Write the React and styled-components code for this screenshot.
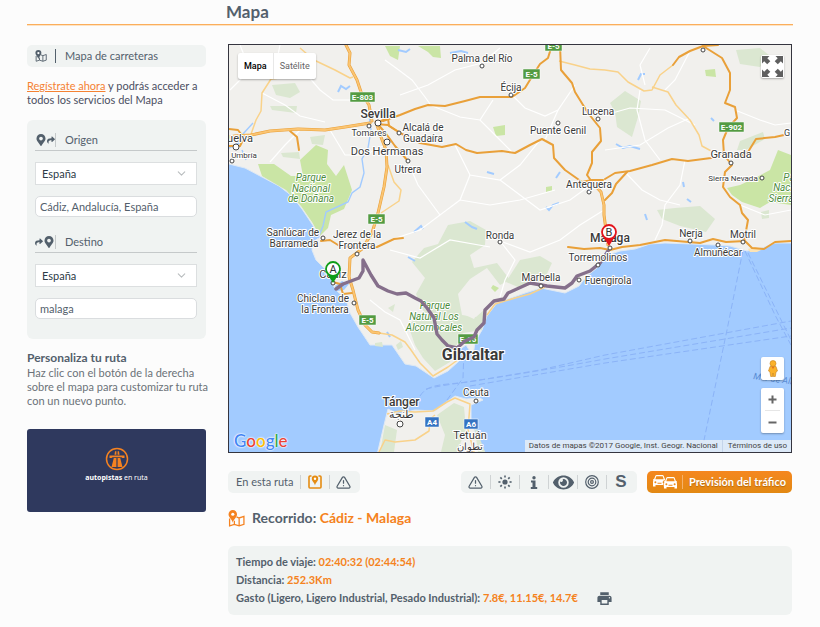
import styled, { createGlobalStyle } from 'styled-components';
import { FaMapMarkerAlt, FaShare, FaEye } from 'react-icons/fa';
import { FiAlertTriangle, FiChevronDown } from 'react-icons/fi';
import { MdPrint } from 'react-icons/md';

const GlobalStyle = createGlobalStyle`
  * {
    box-sizing: border-box;
  }
  body {
    margin: 0;
    background: #fcfcfc;
    color: #53606c;
    font-family: Lato, 'Open Sans', sans-serif;
    font-size: 11px;
    line-height: 14px;
  }
  h1, h2, h3, p {
    margin: 0;
  }
  button, input, select {
    font: inherit;
    color: inherit;
  }
  button {
    border: 0;
    padding: 0;
    background: none;
    cursor: pointer;
  }
`;

const Page = styled.div`
  padding: 0 27px 12px;
`;

const Header = styled.header`
  padding-left: 199px;
  height: 25px;
  border-bottom: 1px solid #fbae5c;
  box-shadow: 0 1px 0 #fde3c4;
  h1 {
    font-size: 17px;
    line-height: 24px;
  }
`;

const Columns = styled.div`
  display: flex;
  gap: 22px;
  padding: 19px 1px 0 0;
`;

const Sidebar = styled.aside`
  flex: 0 0 179px;
  padding-top: 1px;
`;

const Main = styled.main`
  flex: 1;
  min-width: 0;
`;

const SectionTag = styled.div`
  display: flex;
  align-items: center;
  height: 22px;
  padding-left: 8px;
  border-radius: 5px;
  background: #f0f3f2;
  span {
    margin-left: 8px;
    padding-left: 9px;
    border-left: 1px solid #53606c;
  }
`;

const Intro = styled.p`
  margin: 12px 0 13px;
  color: #4b4f62;
  a {
    color: #f58233;
  }
`;

const Panel = styled.form`
  padding: 10px 9px 20px 8px;
  border-radius: 6px;
  background: #f0f3f2;
`;

const FieldTitle = styled.h3`
  display: flex;
  align-items: center;
  height: 21px;
  margin: ${(p) => (p.$spaced ? '15px' : '0')} 0 11px;
  border-bottom: 1px solid #c5c9ca;
  font-size: 11px;
  font-weight: 400;
  span {
    margin-left: auto;
    width: 142px;
    padding-left: 9px;
    border-left: 1px solid #c5c9ca;
  }
`;

const SelectBox = styled.div`
  position: relative;
  margin-bottom: 11px;
  select {
    display: block;
    width: 100%;
    height: 23px;
    padding: 0 6px;
    appearance: none;
    border: 1px solid #dcdfe0;
    border-radius: 0;
    background: #fff;
    color: #2d3a46;
  }
  svg {
    position: absolute;
    right: 9px;
    top: 5px;
    color: #b9bdbf;
    pointer-events: none;
  }
`;

const TextInput = styled.input`
  display: block;
  width: 100%;
  height: 21px;
  padding: 0 4px;
  border: 1px solid #dadddf;
  border-radius: 5px;
  background: #fff;
`;

const Help = styled.section`
  margin: 11px -10px 0 0;
  color: #6b7278;
  h2 {
    color: #53606c;
    font-size: 12px;
    line-height: 16px;
  }
`;

const Banner = styled.a`
  display: flex;
  flex-direction: column;
  align-items: center;
  height: 83px;
  margin-top: 21px;
  padding-top: 18px;
  border-radius: 3px;
  background: #2f395e;
  color: #fff;
  font-family: 'Noto Sans', sans-serif;
  font-size: 7px;
  line-height: 14px;
  text-decoration: none;
`;

const MapFrame = styled.div`
  position: relative;
  aspect-ratio: 564 / 409;
  overflow: hidden;
  border: 1px solid #35353f;
  font-family: Roboto, sans-serif;
  > svg {
    display: block;
    width: 100%;
    height: 100%;
  }
`;

const MapTypes = styled.div`
  position: absolute;
  left: 9px;
  top: 8px;
  display: flex;
  height: 26px;
  border-radius: 2px;
  background: #fff;
  box-shadow: 0 1px 2px rgba(0, 0, 0, 0.3);
  font-size: 9px;
`;

const MapType = styled.button`
  padding: 0 6px;
  color: ${(p) => (p.$active ? '#000' : '#666')};
  font-weight: ${(p) => (p.$active ? 500 : 400)};
  & + & {
    border-left: 1px solid #e8e8e8;
  }
`;

const MapCorner = styled.div`
  position: absolute;
  right: 7px;
  ${(p) => (p.$top ? 'top: 10px;' : 'bottom: 19px;')}
  display: flex;
  flex-direction: column;
  gap: 8px;
`;

const ControlGroup = styled.div`
  width: 23px;
  border-radius: 2px;
  background: #fff;
  box-shadow: 0 1px 2px rgba(0, 0, 0, 0.3);
`;

const MapControl = styled.button`
  display: flex;
  align-items: center;
  justify-content: center;
  width: 23px;
  height: ${(p) => (p.$small ? '22px' : '23px')};
`;

const Divider = styled.div`
  height: 1px;
  margin: 0 4px;
  background: #e6e6e6;
`;

const Attribution = styled.div`
  position: absolute;
  right: 0;
  bottom: 0;
  display: flex;
  background: rgba(245, 245, 245, 0.7);
  color: #444;
  font-size: 8px;
  line-height: 12px;
  span, a {
    padding: 0 4px;
    color: inherit;
    text-decoration: none;
  }
  a {
    border-left: 1px solid #c4d4ea;
    padding-left: 5px;
  }
`;

const GoogleLogo = styled.div`
  position: absolute;
  left: 5px;
  bottom: 0;
  font: 500 17px/22px Lato, sans-serif;
  text-shadow: 0 0 1px #fff, 0 0 2px #fff, 0 0 2px #fff;
`;

const Letter = styled.span`
  color: ${(p) => p.$color};
`;

const Toolbar = styled.div`
  display: flex;
  gap: 10px;
  margin-top: 18px;
`;

const ToolGroup = styled.div`
  display: flex;
  align-items: center;
  height: 22px;
  padding: 0 2px 0 ${(p) => (p.$labelled ? '8px' : '0')};
  margin-right: ${(p) => (p.$labelled ? 'auto' : '0')};
  border-radius: 5px;
  background: #f0f3f2;
`;

const Tool = styled.button`
  display: flex;
  align-items: center;
  justify-content: center;
  width: 29px;
  height: 14px;
  color: #53606c;
  & + &, span + & {
    border-left: 1px solid #cfd3d4;
  }
  span + & {
    margin-left: 6px;
  }
`;

const TrafficButton = styled.button`
  display: flex;
  align-items: center;
  justify-content: space-between;
  flex: 0 0 auto;
  min-width: 145px;
  height: 22px;
  padding: 0 6px;
  border-radius: 5px;
  background: linear-gradient(#f5871f, #e28913);
  color: #fff;
  font-weight: 700;
  white-space: nowrap;
  svg {
    flex: none;
  }
  span {
    padding-left: 6px;
    border-left: 1px solid #f5b26b;
    text-shadow: 0 1px 1px #b5690c;
  }
`;

const RouteTitle = styled.h2`
  display: flex;
  align-items: center;
  gap: 7px;
  margin: 15px 0 18px;
  font-size: 14px;
  line-height: 20px;
  svg {
    display: block;
  }
`;

const Accent = styled.span`
  color: #f58220;
  font-weight: 700;
`;

const Summary = styled.div`
  padding: 7px 8px 8px;
  border-radius: 6px;
  background: #f0f3f2;
  font-weight: 700;
  line-height: 18px;
`;

const CostLine = styled.div`
  display: flex;
  align-items: center;
  gap: 18px;
  height: 18px;
  svg {
    display: block;
  }
`;

// [points, width]
const motorways = [
  ['346,45 350,53 349,65 357,80 361,92 369,105 372,121', 3],
  ['229,137 235,136 251,135 270,131 298,129 325,130 345,127 370,123', 3],
  ['383,121 400,115 415,109 428,105 445,106 465,101 480,97 512,97 525,88 533,75 540,64 548,58 552,45', 2],
  ['376,124 388,125 402,134 420,143 442,147 456,144 466,150 477,153 502,151 515,153 530,145 542,139 553,145 554,158 565,170 582,182 592,180 603,180', 2],
  ['560,45 561,70 572,83 575,92 588,113 600,128 601,141 592,152 592,163 587,175 592,182', 2],
  ['376,122 381,137 386,150 387,167 384,187 378,213 372,233 362,249 350,258 349,277 353,290 358,310 365,325 372,332 379,333', 3],
  ['229,129 238,130 244,138 240,146 229,146', 2],
  ['290,131 297,137 299,150', 2],
  ['605,179 615,173 630,171 652,165 672,159 688,161 711,158 723,152', 2],
  ['605,200 612,193 616,184 627,172', 2],
  ['703,46 722,58 730,73 730,90 725,103 735,107 737,118 728,128 723,140 724,155 732,165 725,172 723,187 730,197 740,205 742,213 748,220 744,242', 2],
  ['718,45 703,46 690,51 679,57 673,65', 2],
  ['726,155 737,157 748,152 756,139 775,137 784,135', 2],
  ['610,250 622,247 640,245 665,240 700,243 713,239 726,242 745,241 752,248 764,249 775,242 791,241', 2],
  ['592,182 601,192 604,205 604,215 608,245', 3],
  ['376,122 387,135 395,146 408,161', 2],
  ['381,121 388,118 389,126 400,133', 2],
  ['321,241 330,240 338,245 355,248 377,247 394,239 403,238', 2],
  ['333,282 340,284 343,294 352,293', 2],
  ['568,247 584,249 600,248 610,250', 2],
];

const minorRoads = [
  '605,70 618,72 628,82 644,91 652,90 660,75 673,65',
  '652,87 668,92 676,105 690,120 699,135 702,146 713,152',
  '250,137 256,120 261,111 262,93 271,79 280,78',
  '300,48 314,60 335,70 350,78 353,77',
  '559,61 575,65 590,69 605,70',
  '388,165 394,182 401,190 399,201 381,213',
  '379,333 392,335 405,342 411,350 420,363 433,376 448,367 459,359',
  '379,452 385,440 395,442 415,440 429,431 430,419 435,415',
  '387,414 400,411 415,412 433,411 447,402 455,398 470,404 468,430 474,452',
  '487,315 495,304 515,298 530,294 545,287',
];

const localRoads = [
  '280,45 277,60 288,70 308,76 320,90 333,100 352,100',
  '262,93 285,105 300,116 325,122',
  '385,60 396,68 412,80 425,97 430,104',
  '400,95 428,85 455,70 482,63 500,48',
  '430,105 460,117 480,120 500,140 512,152',
  '512,95 525,108 545,116 558,110 575,85',
  '480,120 493,100', '455,145 470,175 500,180 520,165 540,140',
  '470,175 460,200 440,215 418,185 408,162',
  '500,180 520,195 540,210 570,200 592,184',
  '440,215 420,230 390,240', '460,200 490,205 520,200 555,190',
  '558,110 545,140', '605,115 630,108 665,110 695,125',
  '605,150 640,145 668,128 690,118', '640,90 637,110 645,140 660,160',
  '735,110 760,120 775,125 791,123', '685,160 680,185 665,205 662,225 655,240',
  '625,172 642,190 660,200 680,205', '740,205 765,215 791,210',
  '300,130 285,145 270,162', '330,130 345,155 365,155 385,145',
  '390,250 420,258 450,240 490,247', '500,241 515,260 505,280 500,297',
  '500,241 530,252 560,240 580,225 604,210', '370,300 385,312 400,320 415,350',
  '240,45 250,70 230,90', '650,48 640,65 645,85', '690,51 675,80 665,90',
];

const greens = [
  'M258,164L274,164L291,176L303,176L300,160L316,145L328,150L327,164L336,176L344,165L352,190L344,209L331,215L328,228L320,236L312,222L301,206L286,190L262,176Z',
  'M493,127L505,125L505,135L496,136Z', 'M546,187l6,-1v5l-6,1Z',
  'M385,46L400,46L398,60L390,56Z', 'M418,46L440,46L441,58L433,57L428,52Z',
  'M727,188L740,185L755,178L770,170L778,150L791,155L791,205L770,202L760,208L742,202L732,195Z',
  'M705,70L715,69L716,77L706,76Z', 'M493,285l6,3l-4,4l-4,-4Z',
];

const paleGreens = [
  'M272,85L295,83L300,92L290,98L276,95Z', 'M270,106L297,106L296,113L272,110Z',
  'M310,137L325,135L323,145L312,144Z', 'M281,153L299,152L300,159L283,157Z',
  'M448,225L470,221L486,230L485,245L470,255L474,268L497,263L510,280L500,285L487,268L470,279L458,294L462,315L476,317L484,310L482,330L463,333L455,348L450,362L435,371L423,358L415,345L408,325L424,312L416,294L425,278L412,262L424,248L438,244Z',
  'M520,260L540,256L552,263L544,280L520,288L506,282Z',
  'M610,103L625,91L641,101L638,117L632,137L617,127L615,112Z',
  'M736,50L760,48L770,56L760,67L740,64Z',
  'M657,210L675,208L700,206L715,219L706,232L680,226L662,219Z',
  'M740,141L763,132L765,139L746,150L737,150Z', 'M761,212l8,-2v8l-7,1Z',
  'M375,343l7,-1l1,5l-8,-1Z', 'M396,345l5,-4l2,6l-5,3Z',
  'M388,308l7,-4l-2,8Z', 'M380,452L385,425L397,430L394,452Z',
  'M437,415L454,403L464,407L466,429L457,452L441,452L445,435Z', 'M474,423L485,452L478,452Z',
];

const waters = [
  '338,92 341,86 346,89 350,86', '398,50 406,52 410,49', '450,53 461,51 468,53', '414,232 421,226 423,229',
  '465,222 472,227 477,229', '546,207 549,210 553,205 559,203', '556,178 560,172', '616,144 623,148 630,146 640,149',
  '638,80 641,74 645,74', '711,118 714,121', '683,182 684,187', '687,199 691,202', '645,214 647,220', '487,172 494,174',
  '408,257 415,261', '387,332 390,337',
];

const dots = [
  ['378', '123', 3], ['369', '126', 2], ['399', '133', 2], ['387', '142', 3], ['408', '161', 2],
  ['482', '66', 2], ['511', '95', 2], ['598', '119', 2], ['558', '123', 2], ['589', '192', 2],
  ['703', '50', 2], ['731', '163', 2], ['762', '178', 2], ['500', '242', 2], ['690', '241', 2],
  ['718', '245', 2], ['743', '242', 2], ['323', '238', 2], ['357', '254', 2], ['333', '283', 2],
  ['354', '303', 2], ['541', '286', 2], ['598', '265', 2], ['579', '280', 2], ['400', '424', 3],
  ['476', '401', 2], ['236', '147', 3], ['232', '161', 2], ['610', '248', 2], ['470', '451', 2],
];

const labels = [
  ['Palma del Río', 482, 62, 10], ['Écija', 511, 91, 10], ['Lucena', 598, 115, 10],
  ['Puente Genil', 558, 134, 10], ['Antequera', 589, 188, 10], ['Ronda', 500, 239, 10],
  ['Sevilla', 378, 118, 12, 500], ['Tomares', 369, 136, 9], ['Alcalá de', 423, 131, 10],
  ['Guadaíra', 423, 142, 10], ['Dos Hermanas', 387, 155, 11], ['Utrera', 408, 173, 10],
  ['uelva', 240, 142, 11], ['Umbría', 244, 158, 8], ['Sanlúcar de', 293, 236, 10],
  ['Barrameda', 294, 247, 10], ['Jerez de la', 357, 238, 10], ['Frontera', 357, 249, 10],
  ['Cádiz', 333, 278, 11], ['Chiclana de', 323, 302, 10], ['la Frontera', 325, 313, 10],
  ['Granada', 731, 158, 11], ['Sierra Nevada', 733, 181, 8], ['Málaga', 610, 242, 12, 500],
  ['Nerja', 691, 237, 10], ['Motril', 743, 238, 10], ['Almuñécar', 718, 256, 10],
  ['Torremolinos', 598, 261, 10], ['Marbella', 541, 281, 10], ['Fuengirola', 608, 284, 10],
  ['Gibraltar', 473, 360, 16, 700], ['Tánger', 401, 406, 12, 500], ['طنجة', 401, 418, 11],
  ['Ceuta', 476, 396, 10], ['Tetuán', 470, 439, 11], ['تطوان', 470, 450, 10], ['G', 787, 136, 9],
];

const parkLabels = [
  ['Parque', 311, 181], ['Nacional', 311, 192], ['de Doñana', 311, 202],
  ['Parque', 435, 309], ['Natural Los', 434, 320], ['Alcornocales', 434, 331],
  ['Pa', 789, 181], ['Naci', 783, 191], ['Sierra', 781, 202],
];

// [text, x, y, width, blue]
const shields = [
  ['E-803', 350, 92, 25], ['E-5', 368, 214, 17], ['E-5', 523, 69, 17], ['E-5', 545, 41, 17],
  ['E-902', 719, 122, 25], ['E-5', 359, 315, 17], ['E-15', 458, 334, 20],
  ['A4', 425, 417, 14, true], ['A6', 464, 419, 14, true],
];

const RouteMap = () => (
  <svg viewBox="229 45 562 407" preserveAspectRatio="xMidYMid slice" role="img" aria-label="Mapa de Andalucía">
    <rect x="229" y="45" width="563" height="407" fill="#a2cbff" />
    <g fill="#f1f0ed" stroke="#dfe9f4">
      <path d="M225,163L245,168L262,177L279,186L292,196L302,209L312,224L320,237L313,242L312,250L316,260L323,267L330,273L332,284L337,291L346,299L350,313L358,327L370,345L392,345L405,364L416,366L434,378L448,371L459,361L459,350L466,345L473,356L475,342L482,330L487,316L496,304L508,299L525,293L541,288L565,293L579,286L586,277L598,267L605,256L620,251L635,249L650,244L665,243L692,244L715,245L730,246L747,251L762,248L775,243L795,243L795,40L225,40Z" />
      <path d="M377,455L384,425L388,409L398,414L415,410L435,411L445,403L455,396L466,399L480,398L483,400L471,405L471,422L477,437L486,455Z" />
    </g>
    <path d="M748,249l6,-2l9,2l-6,3l-7,0Z" fill="#fbe3b5" />
    <g fill="#dbe7d1">{paleGreens.map((d) => <path key={d} d={d} />)}</g>
    <g fill="#cae5a5">{greens.map((d) => <path key={d} d={d} />)}</g>
    <path d="M462,291l12,-6l9,8l-1,12l-8,14l-11,-5l-3,-12Z" fill="#f1f0ed" />
    <g fill="none" stroke="#a2cbff" strokeWidth="1.4">
      <path d="M318,238l5,-12l3,-14l22,-10l4,-9l8,-6l4,-14l-2,-14l6,-11l3,-18l-2,-15" />
      <path d="M229,148l10,-5l4,-9l10,-11M242,150l4,10" />
      {waters.map((w) => <polyline key={w} points={w} strokeWidth="2" />)}
    </g>
    <path d="M335,286l7,-5l7,3l-5,6l-7,1Z" fill="#a2cbff" />
    <g fill="none" stroke="#fff" strokeWidth="1.2">
      {localRoads.map((r) => <polyline key={r} points={r} />)}
    </g>
    <g fill="none" stroke="#f9d28a" strokeWidth="1.5" strokeLinejoin="round">
      {minorRoads.map((r) => <polyline key={r} points={r} />)}
    </g>
    <g fill="none" strokeLinejoin="round" strokeLinecap="round">
      {motorways.map(([pts, w]) => <polyline key={pts} points={pts} stroke="#e9a039" strokeWidth={w} />)}
      {motorways.filter((m) => m[1] === 3).map(([pts]) => (
        <polyline key={pts} points={pts} stroke="#fbc573" strokeWidth="1.8" />
      ))}
    </g>
    <g fill="none" stroke="#8bb3f7" strokeDasharray="6 3">
      <path d="M420,396C428,383 445,385 468,382L540,370L605,355L791,321" />
      <path d="M426,389C450,383 480,382 605,359L791,328" />
      <path d="M447,400L463,378L464,350M470,386L605,363L791,336" />
      <path d="M743,250L727,330L703,445M745,251L775,315L791,345M748,253L791,340" />
    </g>
    <g textAnchor="middle" stroke="#fff" strokeWidth="2" strokeLinejoin="round" paintOrder="stroke" fill="#4c8c3a" fontSize="10" fontStyle="italic">
      {parkLabels.map(([text, x, y]) => <text key={text + x} x={x} y={y}>{text}</text>)}
    </g>
    {shields.map(([text, x, y, w, blue]) => (
      <g key={text + x}>
        <rect x={x} y={y} width={w} height="10" fill={blue ? '#3473c2' : '#539b42'} stroke="#fff" strokeWidth="0.5" />
        <text x={x + w / 2} y={y + 8} textAnchor="middle" fill="#fff" fontSize="8" fontWeight="700">{text}</text>
      </g>
    ))}
    <polyline
      points="336,289 343,284 351,281 359,278 363,271 363,260 371,275 378,286 388,291 397,294 406,293 415,298 421,301 427,308 434,318 437,334 442,340 448,346 457,348 465,341 474,337 477,330 484,323 485,310 494,301 504,299 508,293 530,283 547,286 565,288 572,283 577,276 590,271 600,263 608,251"
      fill="none" stroke="#856f8b" strokeWidth="3.4" strokeLinejoin="round" strokeLinecap="round"
    />
    <g fill="#fff" stroke="#444">
      {dots.map(([cx, cy, r]) => <circle key={cx + cy} cx={cx} cy={cy} r={r} />)}
    </g>
    <g textAnchor="middle" stroke="#fff" strokeWidth="2" strokeLinejoin="round" paintOrder="stroke" fill="#3a3a3a">
      {labels.map(([text, x, y, size, weight]) => (
        <text key={text} x={x} y={y} fontSize={size} fontWeight={weight || 400}>{text}</text>
      ))}
    </g>
    <text x="753" y="379" fill="#5b8ed6" fontSize="9" fontStyle="italic" transform="rotate(8 753 379)">Mar de Alborán</text>
    <Pin x={333} y={269} tip={14} color="#0f9d18" letter="A" />
    <Pin x={609} y={232} tip={14} color="#e3131b" letter="B" />
  </svg>
);

const Pin = ({ x, y, tip, color, letter }) => (
  <g transform={`translate(${x} ${y})`}>
    <path d={`M-7,3L0,${tip}L7,3Z`} fill={color} />
    <circle r="7" fill="#fff" stroke={color} strokeWidth="1.8" />
    <text y="4" textAnchor="middle" fontSize="11" fill="#333">{letter}</text>
  </g>
);

const RoadMapIcon = ({ size = 12, pin = 'currentColor' }) => (
  <svg width={size} height={size} viewBox="0 0 16 16" fill="none" stroke="currentColor">
    <path d="M1.500,8V15L6,13.500L10.500,15L15,13.500V6L10.500,7.500L8,6.500M6,10V13.500M10.500,7.500V15" strokeWidth="1.200" />
    <path d="M4.500,0A4,4 0 0 1 8.500,4C8.500,7 5,9 4.500,12C4,9 0.500,7 0.500,4A4,4 0 0 1 4.500,0Z" fill={pin} stroke="none" />
    <circle cx="4.500" cy="4" r="1.500" fill="#fff" stroke="none" />
  </svg>
);

const MotorwayLogo = () => (
  <svg width="24" height="24" viewBox="0 0 24 24">
    <circle cx="12" cy="12" r="10.500" fill="none" stroke="#f58220" strokeWidth="1.500" />
    <g fill="#f58220">
      <path d="M4.500,8.500H19.500V11H17.500L16.500,10.300H7.500L6.500,11H4.500Z" />
      <path d="M10,4.300H11.400V7.700H9.500ZM12.600,4.300H14L14.500,7.700H12.600Z" />
      <path d="M8.800,11H11.400V20H6.500ZM12.600,11H15.200L17.500,20H12.600Z" />
    </g>
  </svg>
);

const ExpandIcon = () => (
  <svg width="23" height="23" viewBox="0 0 23 23" fill="#5f5f5f">
    {[0, 90, 180, 270].map((deg) => (
      <path key={deg} d="M1,1H8.500L6.300,3.200L9.300,6.200L6.200,9.300L3.200,6.300L1,8.500Z" transform={`rotate(${deg} 11.5 11.5)`} />
    ))}
  </svg>
);

const Pegman = () => (
  <svg width="10" height="17" viewBox="0 0 10 17" fill="#fbb22b" stroke="#c8821b" strokeWidth="0.600">
    <path d="M2,6.500H8L9.500,11L8,12L7.300,16.500H5.300L5,13L4.700,16.500H2.700L2,12L0.500,11Z" />
    <circle cx="5" cy="3.500" r="3" />
    <path d="M3.500,6.800L5,9L6.500,6.800Z" fill="#e8711c" stroke="none" />
  </svg>
);

const ZoomIcon = ({ plus }) => (
  <svg width="9" height="9" viewBox="0 0 9 9" fill="none" stroke="#666" strokeWidth="2">
    <path d={plus ? 'M0.500,4.500H8.500M4.500,0.500V8.500' : 'M0.500,4.500H8.500'} />
  </svg>
);

const PoiIcon = () => (
  <svg width="14" height="14" viewBox="0 0 14 14" fill="none" stroke="#e58c12" strokeWidth="1.600">
    <path d="M3.500,1H2Q1,1 1,2V12Q1,13 2,13H12Q13,13 13,12V2Q13,1 12,1H10.500" />
    <path d="M7,0.500A3.200,3.200 0 0 1 10.200,3.700C10.200,6.500 7.500,7.500 7,10.500C6.500,7.500 3.800,6.500 3.800,3.700A3.200,3.200 0 0 1 7,0.500Z" fill="#e58c12" stroke="none" />
    <circle cx="7" cy="3.800" r="1.200" fill="#fff" stroke="none" />
  </svg>
);

const SunIcon = () => (
  <svg width="14" height="14" viewBox="0 0 14 14" stroke="currentColor" strokeWidth="1.600">
    <circle cx="7" cy="7" r="2.600" fill="currentColor" stroke="none" />
    {[0, 45, 90, 135, 180, 225, 270, 315].map((deg) => (
      <path key={deg} d="M7,0.400V2.500" transform={`rotate(${deg} 7 7)`} />
    ))}
  </svg>
);

const InfoIcon = () => (
  <svg width="8" height="13" viewBox="0 0 8 13" fill="currentColor">
    <circle cx="4" cy="1.800" r="1.700" />
    <path d="M1,4.500H5.500V11H7.200V13H0.800V11H2.500V6.500H1Z" />
  </svg>
);

const TargetIcon = () => (
  <svg width="14" height="14" viewBox="0 0 14 14" fill="none" stroke="currentColor" strokeWidth="1.200">
    <circle cx="7" cy="7" r="6.300" />
    <circle cx="7" cy="7" r="3.800" />
    <circle cx="7" cy="7" r="1.400" />
  </svg>
);

const ServiceLetter = styled.b`
  font: 700 17px/14px 'Liberation Sans', sans-serif;
`;

const FrontCar = ({ x, y }) => (
  <g transform={`translate(${x} ${y})`}>
    <path
      d="M2.5,0.500Q2.800,0 3.500,0H9.500Q10.200,0 10.500,0.500L12,4.200H13V5.200L12.600,5.500Q13,6 13,7V11.500H10.500V10H2.500V11.500H0V7Q0,6 0.400,5.500L0,5.200V4.200H1Z"
      fill="#fff" stroke="#ee8a1b" strokeWidth="1.2" paintOrder="stroke"
    />
    <path d="M3.300,1.300H9.700L10.700,4.300H2.300ZM4.500,7.800H8.500V8.800H4.500Z" fill="#ee8a1b" />
    <circle cx="2.400" cy="7.200" r="1" fill="#ee8a1b" />
    <circle cx="10.600" cy="7.200" r="1" fill="#ee8a1b" />
  </g>
);

const CarsIcon = () => (
  <svg width="24" height="14" viewBox="0 0 24 14">
    <FrontCar x={0} y={0} />
    <FrontCar x={11} y={2} />
  </svg>
);

const logoLetters = [
  ['G', '#4285f4'], ['o', '#ea4335'], ['o', '#fbbc05'], ['g', '#4285f4'], ['l', '#34a853'], ['e', '#ea4335'],
];

const CountrySelect = ({ label }) => (
  <SelectBox>
    <select aria-label={label} defaultValue="es">
      <option value="es">España</option>
    </select>
    <FiChevronDown size={13} />
  </SelectBox>
);

const App = () => (
  <>
    <GlobalStyle />
    <Page>
      <Header>
        <h1>Mapa</h1>
      </Header>
      <Columns>
        <Sidebar>
          <SectionTag>
            <RoadMapIcon />
            <span>Mapa de carreteras</span>
          </SectionTag>
          <Intro>
            <a href="#registro">Regístrate ahora</a> y podrás acceder a todos los servicios del Mapa
          </Intro>
          <Panel>
            <FieldTitle>
              <FaMapMarkerAlt size={12} />
              <FaShare size={8} />
              <span>Origen</span>
            </FieldTitle>
            <CountrySelect label="País de origen" />
            <TextInput aria-label="Origen" defaultValue="Cádiz, Andalucía, España" />
            <FieldTitle $spaced>
              <FaShare size={8} />
              <FaMapMarkerAlt size={12} />
              <span>Destino</span>
            </FieldTitle>
            <CountrySelect label="País de destino" />
            <TextInput aria-label="Destino" defaultValue="malaga" />
          </Panel>
          <Help>
            <h2>Personaliza tu ruta</h2>
            <p>Haz clic con el botón de la derecha sobre el mapa para customizar tu ruta con un nuevo punto.</p>
          </Help>
          <Banner href="#autopistas">
            <MotorwayLogo />
            <span><b>autopistas</b> en ruta</span>
          </Banner>
        </Sidebar>
        <Main>
          <MapFrame>
            <RouteMap />
            <MapTypes>
              <MapType $active>Mapa</MapType>
              <MapType>Satélite</MapType>
            </MapTypes>
            <MapCorner $top>
              <ControlGroup>
                <MapControl aria-label="Pantalla completa"><ExpandIcon /></MapControl>
              </ControlGroup>
            </MapCorner>
            <MapCorner>
              <ControlGroup>
                <MapControl aria-label="Street View"><Pegman /></MapControl>
              </ControlGroup>
              <ControlGroup>
                <MapControl $small aria-label="Acercar"><ZoomIcon plus /></MapControl>
                <Divider />
                <MapControl $small aria-label="Alejar"><ZoomIcon /></MapControl>
              </ControlGroup>
            </MapCorner>
            <GoogleLogo>
              {logoLetters.map(([l, color], i) => <Letter key={i} $color={color}>{l}</Letter>)}
            </GoogleLogo>
            <Attribution>
              <span>Datos de mapas ©2017 Google, Inst. Geogr. Nacional</span>
              <a href="#terminos">Términos de uso</a>
            </Attribution>
          </MapFrame>
          <Toolbar>
            <ToolGroup $labelled>
              <span>En esta ruta</span>
              <Tool aria-label="Puntos de interés"><PoiIcon /></Tool>
              <Tool aria-label="Incidencias en ruta"><FiAlertTriangle size={15} strokeWidth={2} /></Tool>
            </ToolGroup>
            <ToolGroup>
              <Tool aria-label="Incidencias"><FiAlertTriangle size={15} strokeWidth={2} /></Tool>
              <Tool aria-label="Tiempo"><SunIcon /></Tool>
              <Tool aria-label="Información"><InfoIcon /></Tool>
              <Tool aria-label="Cámaras"><FaEye size={21} /></Tool>
              <Tool aria-label="Radares"><TargetIcon /></Tool>
              <Tool aria-label="Servicios"><ServiceLetter>S</ServiceLetter></Tool>
            </ToolGroup>
            <TrafficButton>
              <CarsIcon />
              <span>Previsión del tráfico</span>
            </TrafficButton>
          </Toolbar>
          <RouteTitle>
            <Accent as="i"><RoadMapIcon size={17} /></Accent>
            <span>Recorrido: <Accent>Cádiz - Malaga</Accent></span>
          </RouteTitle>
          <Summary>
            <div>Tiempo de viaje: <Accent>02:40:32 (02:44:54)</Accent></div>
            <div>Distancia: <Accent>252.3Km</Accent></div>
            <CostLine>
              <span>Gasto (Ligero, Ligero Industrial, Pesado Industrial): <Accent>7.8€, 11.15€, 14.7€</Accent></span>
              <button aria-label="Imprimir"><MdPrint size={17} color="#53606c" /></button>
            </CostLine>
          </Summary>
        </Main>
      </Columns>
    </Page>
  </>
);

export default App;
